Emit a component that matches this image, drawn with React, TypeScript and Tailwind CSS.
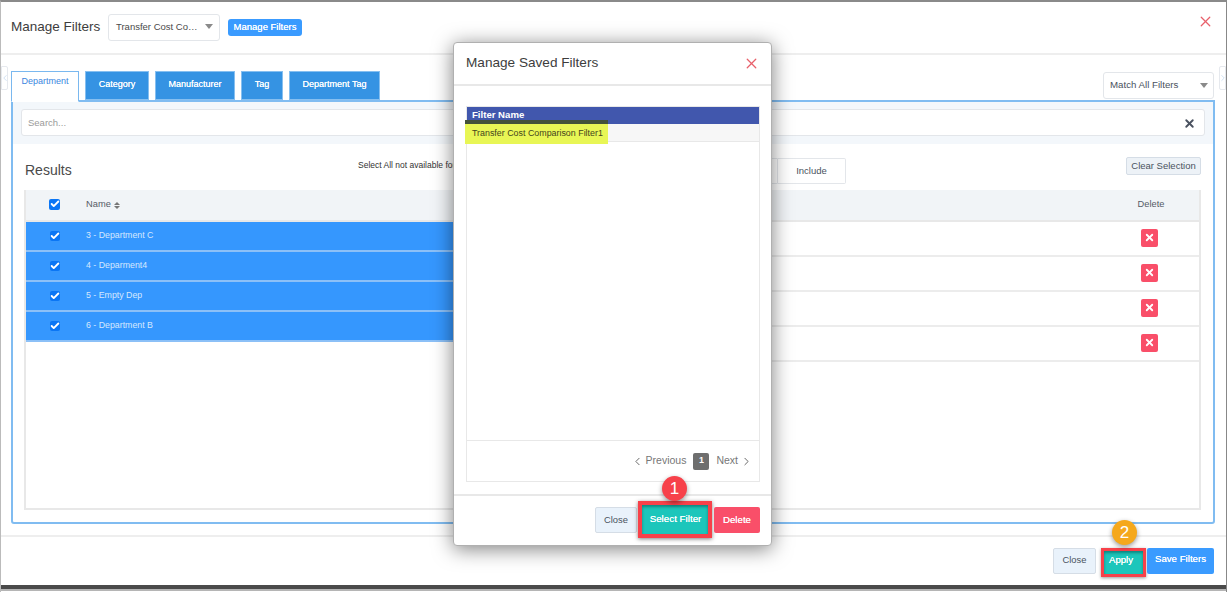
import { X, ChevronLeft, ChevronRight, Check } from "lucide-react";

const tabs = ["Category", "Manufacturer", "Tag", "Department Tag"];
const departments = ["3 - Department C", "4 - Deparment4", "5 - Empty Dep", "6 - Department B"];

function Caret() {
  return <span className="block w-0 h-0 border-x-[4px] border-x-transparent border-t-[5px] border-t-[#8a8a8a]" />;
}

function Box({ size, className }: { size: string; className?: string }) {
  return (
    <span className={`${size} ${className ?? ""} rounded-[2px] bg-[#0b76f5] flex items-center justify-center`}>
      <Check size={10} strokeWidth={4.5} className="text-white" />
    </span>
  );
}

function NumberBadge({ n, color, className }: { n: string; color: string; className: string }) {
  return (
    <span
      className={`absolute w-[25px] h-[25px] rounded-full ${color} ${className} text-white text-[17px] flex items-center justify-center shadow-[0_2px_5px_rgba(0,0,0,0.4)]`}
    >
      {n}
    </span>
  );
}

export default function App() {
  return (
    <div className="relative w-[1227px] h-[592px] overflow-hidden bg-white text-[#3f4650] font-['Liberation_Sans',Arial,sans-serif] border-t-2 border-t-[#8a8a8a] border-l border-l-[#bbb] border-r border-r-[#888] flex flex-col">
      {/* Header */}
      <div className="h-[53px] shrink-0 flex items-center pl-[10px] pr-[12px] border-b-2 border-[#eeeeee]">
        <h1 className="w-[90px] shrink-0 whitespace-nowrap text-[13.5px] text-[#3d3d3d]">Manage Filters</h1>
        <div className="ml-[7px] w-[112px] h-[27px] border border-[#e3e6ea] rounded-[3px] flex items-center justify-between pl-[7px] pr-[6px] text-[9.5px] text-[#4a4a4a]">
          <span>Transfer Cost Co…</span>
          <span className="-mt-[3px]"><Caret /></span>
        </div>
        <button className="ml-2 w-[74px] h-[17px] rounded-[3px] bg-[#3a9bff] text-white text-[9.5px] [text-shadow:0_0_0.6px_white]">Manage Filters</button>
        <X size={17} strokeWidth={1.8} className="ml-auto self-start mt-[11px] text-[#e8606a]" />
      </div>

      {/* Tabs */}
      <div className="relative h-[45px] shrink-0 pl-[10px] pr-[12px] flex items-end">
        <div className="absolute left-0 top-[11px] w-[7px] h-[24px] border border-[#e6e9ee] rounded-r-[2px] flex items-center justify-center overflow-hidden">
          <ChevronLeft size={10} className="text-[#c8dcf2] shrink-0" />
        </div>
        <div className="w-[68px] h-[31px] border border-[#7ab8ef] border-b-white bg-white text-[#3a86e0] text-[9px] flex justify-center pt-[3px] -mb-[2px] z-10 relative">Department</div>
        <div className="flex gap-[6px] ml-[6px]">
          {tabs.map((t) => (
            <div
              key={t}
              className={`h-[29px] pb-[1px] border border-[#86bff0] bg-[#3593e3] text-white text-[9px] [text-shadow:0_0_0.6px_white] flex items-center justify-center ${
                t === "Category" ? "w-[64px]" : t === "Manufacturer" ? "w-[80px]" : t === "Tag" ? "w-[42px]" : "w-[91px]"
              }`}
            >
              {t}
            </div>
          ))}
        </div>
        <div className="ml-auto mb-[1px] w-[111px] h-[27px] border border-[#e3e6ea] rounded-[3px] flex items-center justify-between pl-[6px] pr-[5px] text-[9.7px] text-[#4a5260]">
          <span>Match All Filters</span>
          <Caret />
        </div>
        <div className="absolute right-0 top-[11px] w-[7px] h-[24px] border border-[#e6e9ee] rounded-l-[2px] flex items-center justify-center overflow-hidden">
          <ChevronRight size={10} className="text-[#c8dcf2] shrink-0" />
        </div>
      </div>

      {/* Panel */}
      <div className="ml-[10px] mr-[11px] h-[424px] shrink-0 border-2 border-[#80bcf1] rounded-b-[3px] flex flex-col">
        <div className="h-[42px] shrink-0 bg-[#f3f7fb] px-[8px] pt-[7px]">
          <div className="h-[27px] pt-[1px] bg-white border border-[#e3e6ea] rounded-[3px] flex items-center justify-between pl-[6px] pr-[8px]">
            <span className="text-[9.5px] text-[#9a9a9a]">Search...</span>
            <X size={13} strokeWidth={3.5} className="text-[#4a5260]" />
          </div>
        </div>
        <div className="relative flex-1 pl-[11px] pr-[12px] pb-[12px] flex flex-col min-h-0">
          <div className="h-[46px] shrink-0 relative flex">
            <span className="ml-[1px] mt-[16px] text-[14px] text-[#4a4a4a]">Results</span>
            <span className="absolute left-[334px] top-[15px] text-[8.5px] text-[#333]">Select All not available for filtered results</span>
            <div className="absolute left-[670px] top-[14px] w-[152px] h-[26px] flex text-[9.5px] text-[#4a5260]">
              <span className="w-[84px] border border-[#e3e6ea] rounded-l-[2px]" />
              <span className="flex-1 border border-[#e3e6ea] border-l-0 rounded-r-[2px] flex items-center justify-center">Include</span>
            </div>
            <button className="absolute right-0 top-[13px] w-[75px] h-[18px] bg-[#edf2f7] border border-[#d5dde6] rounded-[2px] text-[9.5px] text-[#4a5260]">Clear Selection</button>
          </div>

          <div className="flex-1 border-x-2 border-b-2 border-[#e8e8e8] flex flex-col min-h-0">
            <div className="h-[32px] shrink-0 bg-[#f1f4f7] border-b-2 border-[#e8e8e8] flex items-center pl-[23px] text-[9.3px] text-[#555b66]">
              <Box size="w-[11px] h-[11px]" className="mb-[2px]" />
              <span className="ml-[26px]">Name</span>
              <span className="ml-[3px] flex flex-col gap-[1px]">
                <span className="w-0 h-0 border-x-[3px] border-x-transparent border-b-[3px] border-b-[#777]" />
                <span className="w-0 h-0 border-x-[3px] border-x-transparent border-t-[3px] border-t-[#777]" />
              </span>
              <span className="ml-auto w-[96px] text-center">Delete</span>
            </div>
            <div className="flex-1 grid grid-cols-2">
              <div>
                {departments.map((d) => (
                  <div key={d} className="h-[30px] bg-[#3597fe] border-b-2 border-[#8cc0f7] flex text-[8.8px] text-[#d6e8ff]">
                    <span className="w-[49px] pl-[24px] pt-[9px]"><Box size="w-[10px] h-[10px]" /></span>
                    <span className="ml-[11px] pt-[7px]">{d}</span>
                  </div>
                ))}
              </div>
              <div>
                {departments.map((d) => (
                  <div key={d} className="h-[35px] border-b-2 border-[#ececec] flex items-center justify-end pr-[41px]">
                    <span className="mb-[2px] w-[17px] h-[18px] rounded-[2px] bg-[#f94f69] flex items-center justify-center">
                      <X size={11} strokeWidth={4} className="text-white" />
                    </span>
                  </div>
                ))}
              </div>
            </div>
          </div>
        </div>
      </div>

      {/* Footer */}
      <div className="mt-[11px] h-[50px] shrink-0 border-t-2 border-[#eeeeee] pt-[11px] pr-[12px] flex justify-end items-start">
        <button className="w-[43px] h-[26px] pb-[2px] mr-[5px] bg-[#e9f2fb] border border-[#d5dde6] rounded-[2px] text-[9.4px] text-[#4a5260]">Close</button>
        <button className="w-[45px] h-[29px] pb-[4px] pr-[5px] mr-[1px] bg-[#1cc6bb] border-[3px] border-[#f7414a] text-white text-[9.6px] [text-shadow:0_0_0.6px_white] shadow-[0_1px_3px_rgba(0,0,0,0.4),inset_0_2px_3px_rgba(0,70,70,0.5)]">Apply</button>
        <button className="w-[67px] h-[26px] pb-[3px] bg-[#3a9bff] rounded-[2px] text-white text-[9.7px] [text-shadow:0_0_0.6px_white]">Save Filters</button>
      </div>

      {/* Page behind, cut off at the bottom of the capture */}
      <div className="h-[4px] shrink-0 bg-[#4a4a4a] overflow-hidden flex justify-between pl-[12px] pr-[120px] text-[11px] leading-[16px] text-black">
        <div className="flex gap-[13px]">
          <span>Privacy Policy</span>
          <span>Support</span>
          <span>Contact</span>
        </div>
        <div className="flex gap-[33px]">
          <span>Email Support</span>
          <span>Phone Support</span>
        </div>
      </div>
      <div className="h-[2px] shrink-0 bg-[#b5b5b5]" />

      <NumberBadge n="2" color="bg-[#f5a81c]" className="left-[1111px] top-[518px]" />

      {/* Saved filters modal */}
      <div className="absolute left-[452px] top-[40px] w-[319px] h-[504px] bg-white rounded-[4px] border border-[#b0b0b0] shadow-[0_3px_20px_rgba(0,0,0,0.5)] flex flex-col">
        <div className="h-[43px] shrink-0 border-b-2 border-[#e8e8e8] flex items-center justify-between pl-[12px] pr-[11px]">
          <h2 className="text-[13.6px] text-[#3d3d3d]">Manage Saved Filters</h2>
          <X size={17} strokeWidth={1.8} className="text-[#e8606a]" />
        </div>
        <div className="flex-1 pl-[12px] pr-[11px] pt-[20px] pb-[12px] flex flex-col min-h-0">
          <div className="flex-1 border border-[#e8e8e8] flex flex-col min-h-0">
            <div className="h-[17px] shrink-0 bg-[#4157ad] text-white text-[9.6px] font-bold pl-[5px] flex items-center">Filter Name</div>
            <div className="relative h-[18px] pt-[2px] shrink-0 bg-[#f7f7f7] border-b border-[#e8e8e8] text-[8.9px] pl-[5px] flex items-center">
              <span className="absolute -left-[2px] -top-[4px] w-[143px] h-[24px] bg-[#e8f655] border-t-[4px] border-[#43523a]" />
              <span className="relative text-[#44441c]">Transfer Cost Comparison Filter1</span>
            </div>
            <div className="flex-1" />
            <div className="h-[41px] shrink-0 border-t border-[#e8e8e8] flex items-center justify-end pr-[6px] text-[10.5px] text-[#777]">
              <ChevronLeft size={13} strokeWidth={1.8} className="mr-[2px] text-[#666]" />
              <span>Previous</span>
              <span className="ml-[7px] mr-[7px] w-[16px] h-[17px] rounded-[2px] bg-[#6e6e6e] text-white text-[9px] font-semibold flex items-center justify-center">1</span>
              <span>Next</span>
              <ChevronRight size={13} strokeWidth={1.8} className="ml-[2px] text-[#666]" />
            </div>
          </div>
        </div>
        <div className="relative h-[51px] shrink-0 border-t-2 border-[#e8e8e8] pt-[11px] pr-[11px] flex justify-end items-start">
          <button className="w-[42px] h-[26px] bg-[#e9f2fb] border border-[#d5dde6] rounded-[2px] text-[9.4px] text-[#4a5260]">Close</button>
          <button className="-mt-[6px] ml-[1px] pl-[1px] w-[74px] h-[37px] bg-[#1cc6bb] border-[4px] border-[#f7414a] text-white text-[9.8px] [text-shadow:0_0_0.6px_white] shadow-[0_1px_4px_rgba(0,0,0,0.5),inset_0_2px_3px_rgba(0,70,70,0.5)]">Select Filter</button>
          <button className="ml-[2px] w-[46px] h-[26px] rounded-[2px] bg-[#f94f69] text-white text-[9.7px] [text-shadow:0_0_0.6px_white]">Delete</button>
        </div>
        <NumberBadge n="1" color="bg-[#f7414a]" className="left-[208px] top-[433px]" />
      </div>
    </div>
  );
}
